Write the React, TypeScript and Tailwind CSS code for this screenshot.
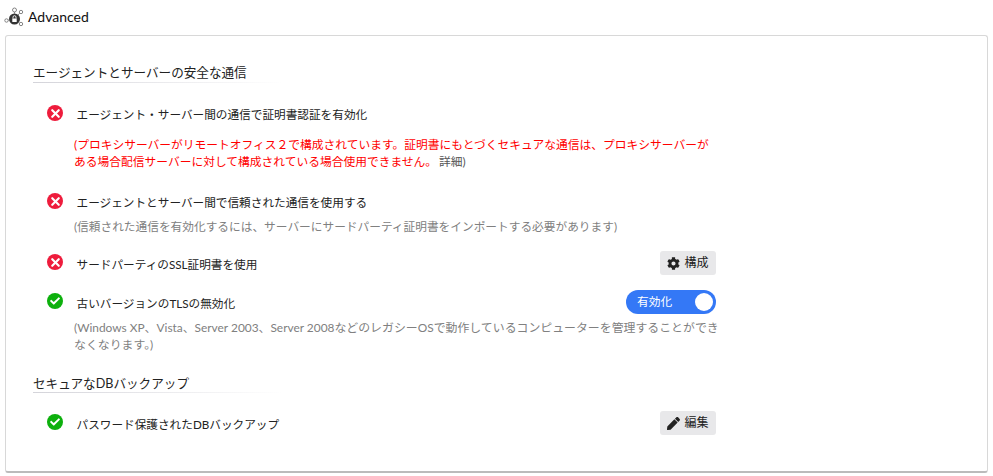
import { FaCog, FaPen, FaCheck } from "react-icons/fa"
import { X } from "lucide-react"

const font = "font-['Lato','Noto_Sans_CJK_JP',sans-serif]"

function Fail() {
  return (
    <span className="flex h-4 w-4 items-center justify-center rounded-full bg-[#ee1c3c]">
      <X size={13} strokeWidth={4} className="text-white" />
    </span>
  )
}

function Ok() {
  return (
    <span className="flex h-4 w-4 items-center justify-center rounded-full bg-[#0db00d]">
      <FaCheck size={10} className="text-white" />
    </span>
  )
}

function Btn({ icon, label }: { icon: React.ReactNode; label: string }) {
  return (
    <button className="flex h-6 w-14 items-center justify-center gap-[4px] rounded-[3px] bg-[#e8e8ea] text-xs text-[#222]">
      {icon}
      {label}
    </button>
  )
}

function Row({
  status,
  children,
  right,
  latin,
}: {
  status: "ok" | "fail"
  children: React.ReactNode
  right?: React.ReactNode
  latin?: boolean
}) {
  return (
    <div className="flex h-6 w-[683px] items-center">
      <div className="ml-[14px] w-[29.5px] -translate-y-[1px]">{status === "ok" ? <Ok /> : <Fail />}</div>
      <span className={latin ? "translate-y-[2px] text-[11.65px] text-[#222]" : "translate-y-px text-[11.65px] text-[#222]"}>
        {children}
      </span>
      {right && <div className="ml-auto">{right}</div>}
    </div>
  )
}

function Heading({ children, latin }: { children: React.ReactNode; latin?: boolean }) {
  return (
    <div>
      <h2 className={latin ? "translate-y-px text-[12.6px] leading-[18px] text-[#222]" : "text-[12.6px] leading-[18px] text-[#222]"}>
        {children}
      </h2>
      <div className="h-px w-[250px] bg-linear-to-r from-[#d4d4da] to-transparent" />
    </div>
  )
}

export default function App() {
  return (
    <div className={`${font} h-[476px] w-[993px] overflow-hidden bg-white`}>
      <div className="flex h-[35px] items-center gap-[3px] pb-[2px] pl-[4px]">
        <svg width="21" height="22" viewBox="0 0 21 22" fill="none">
          <circle cx="10.5" cy="13" r="5.5" fill="#333" />
          <rect x="8.3" y="12.5" width="4.4" height="3.5" fill="#fff" />
          <path d="M9 12.5v-1.3a1.5 1.5 0 0 1 3 0v1.3" stroke="#fff" strokeWidth="0.9" />
          <g stroke="#777" strokeWidth="0.9">
            <circle cx="10.5" cy="4" r="2" />
            <circle cx="17" cy="6" r="1.7" />
            <circle cx="2.5" cy="14.5" r="1.7" />
            <circle cx="17" cy="18" r="1.7" />
            <path d="M10.5 6v2M15.7 7.2 14 9M4.2 14.2l1-.4M15.5 17l-1.3-.9" />
          </g>
        </svg>
        <span className="text-[14px] text-[#111]">Advanced</span>
      </div>

      <div className="ml-[5px] h-[438px] w-[983px] rounded-[3px] border border-[#d8d8d8] border-b-2 border-b-[#bbb] pl-[27px]">
        <div className="mt-[28px]">
          <Heading>エージェントとサーバーの安全な通信</Heading>
        </div>

        <div className="mt-[19px]">
          <Row status="fail">エージェント・サーバー間の通信で証明書認証を有効化</Row>
        </div>
        <p className="ml-[41px] mt-[10px] w-[640px] text-[11.75px] leading-[17px] text-[#f00]">
          (プロキシサーバーがリモートオフィス２で構成されています。証明書にもとづくセキュアな通信は、プロキシサーバーがある場合配信サーバーに対して構成されている場合使用できません。
          <span className="ml-[2px] text-[#555]">詳細)</span>
        </p>

        <div className="mt-[20px]">
          <Row status="fail">エージェントとサーバー間で信頼された通信を使用する</Row>
        </div>
        <p className="ml-[41px] mt-[4px] text-[11.7px] leading-[17px] text-[#808080]">
          (信頼された通信を有効化するには、サーバーにサードパーティ証明書をインポートする必要があります)
        </p>

        <div className="mt-[16px]">
          <Row latin status="fail" right={<Btn icon={<FaCog size={13} />} label="構成" />}>
            サードパーティのSSL証明書を使用
          </Row>
        </div>
        <div className="mt-[15px]">
          <Row
            latin
            status="ok"
            right={
              <div className="flex h-6 w-[90px] items-center justify-between rounded-full bg-[#3478f6] pl-[11px] pr-[3px] text-[11.7px] text-white">
                有効化
                <span className="h-[18px] w-[18px] rounded-full bg-white" />
              </div>
            }
          >
            古いバージョンのTLSの無効化
          </Row>
        </div>
        <p className="ml-[41px] mt-[5px] w-[650px] text-[11.9px] leading-[17px] text-[#808080]">
          (Windows XP、Vista、Server 2003、Server 2008などのレガシーOSで動作しているコンピューターを管理することができなくなります。)
        </p>

        <div className="mt-[21px]">
          <Heading latin>セキュアなDBバックアップ</Heading>
        </div>

        <div className="mt-[18px]">
          <Row latin status="ok" right={<Btn icon={<FaPen size={13} />} label="編集" />}>
            パスワード保護されたDBバックアップ
          </Row>
        </div>
      </div>
    </div>
  )
}
